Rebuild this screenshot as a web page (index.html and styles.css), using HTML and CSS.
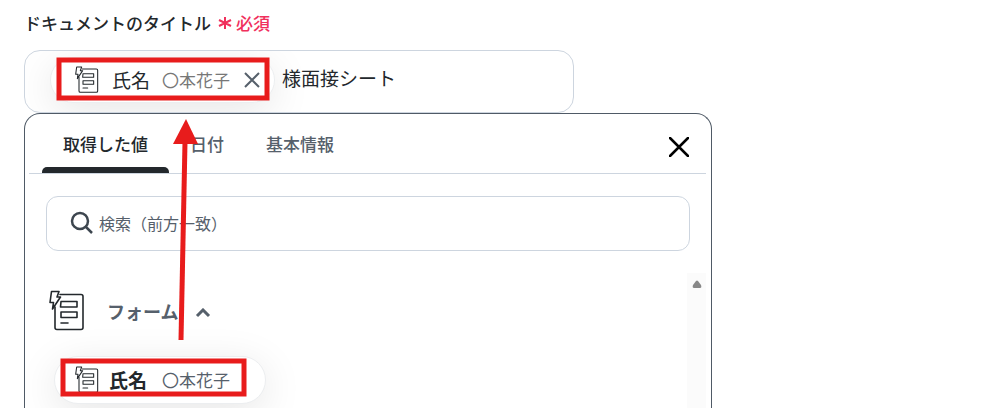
FILE: index.html
```html
<!DOCTYPE html>
<html lang="ja">
<head>
  <meta charset="UTF-8">
  <title>ドキュメントのタイトル</title>
  <link rel="stylesheet" href="styles.css">
</head>
<body>

<svg class="symbols">
  <symbol id="form-icon" viewBox="0 0 36 42">
    <g fill="none" stroke="#23282c" stroke-width="1.6" stroke-linejoin="round" stroke-linecap="round">
      <path d="M11 4.5H32Q34 4.5 34 6.5V37.5Q34 39.5 32 39.5H8Q6 39.5 6 37.5V17"/>
      <path d="M2.5 1.5H10L8 7H11.5L3.5 19L4.5 12.5H1Z"/>
      <path d="M12 11.5H28V17H11.5ZM12 22H28V27.5H12ZM12 33H19"/>
    </g>
  </symbol>
</svg>

<form class="editor">
  <label class="title-label" for="docTitle">ドキュメントのタイトル
    <span class="required"><svg width="14" height="14" viewBox="0 0 14 14"><path d="M7 1V13M1 4L13 10M13 4L1 10"/></svg>必須</span>
  </label>

  <div class="title-field">
    <span class="chip">
      <svg class="chip-icon"><use href="#form-icon"/></svg>
      <span class="chip-name">氏名</span>
      <span class="chip-value">〇本花子</span>
      <button type="button" class="chip-remove" aria-label="削除">
        <svg width="16" height="16" viewBox="0 0 16 16"><path d="M1 1L15 15M15 1L1 15"/></svg>
      </button>
    </span>
    <input type="text" id="docTitle" class="title-input" value="様面接シート">
  </div>

  <div class="panel">
    <div class="panel-header">
      <div class="tabs" role="tablist">
        <button type="button" role="tab" class="tab active" aria-selected="true">取得した値</button>
        <button type="button" role="tab" class="tab">日付</button>
        <button type="button" role="tab" class="tab">基本情報</button>
      </div>
      <button type="button" class="close" aria-label="閉じる">
        <svg width="20" height="20" viewBox="0 0 20 20"><path d="M1 1L19 19M19 1L1 19"/></svg>
      </button>
    </div>

    <div class="search">
      <svg width="24" height="24" viewBox="0 0 24 24"><circle cx="10" cy="10" r="8"/><path d="M16 16L22 22"/></svg>
      <input type="text" class="search-input" placeholder="検索（前方一致）" aria-label="検索">
    </div>

    <div class="list">
      <div class="list-body">
        <button type="button" class="group" aria-expanded="true">
          <svg class="group-icon"><use href="#form-icon"/></svg>
          <span>フォーム</span>
          <svg class="caret" width="16" height="10" viewBox="0 0 16 10"><path d="M2 8L8 2L14 8"/></svg>
        </button>
        <button type="button" class="chip option">
          <svg class="chip-icon"><use href="#form-icon"/></svg>
          <span class="chip-name">氏名</span>
          <span class="chip-value">〇本花子</span>
        </button>
      </div>
      <div class="scrollbar">
        <svg width="10" height="8" viewBox="0 0 10 8"><path d="M4 1Q5 0 6 1L9 5Q10 8 8 8H2Q0 8 1 5Z"/></svg>
      </div>
    </div>
  </div>
</form>

<!-- guide marks drawn over the form -->
<svg class="guide" width="280" height="408" viewBox="0 0 280 408">
  <rect x="59" y="60" width="208" height="38"/>
  <rect x="63" y="361" width="181" height="33"/>
  <path class="shaft" d="M181 340L185 142"/>
  <path class="head" d="M186 119L198 144H173Z"/>
</svg>

</body>
</html>
```
FILE: styles.css
```css
* {
  box-sizing: border-box;
}
body {
  margin: 0;
  background: #fff;
  color: #23282c;
  font-family: "Noto Sans CJK JP", sans-serif;
  font-size: 17px;
  line-height: 24px;
}
button, input {
  font: inherit;
  color: inherit;
  border: none;
  background: none;
  padding: 0;
}
button {
  cursor: pointer;
}
input {
  outline: none;
  min-width: 0;
  flex: 1;
}
svg {
  flex: none;
  fill: none;
  stroke: currentColor;
}
.symbols {
  display: none;
}
.editor {
  display: flex;
  flex-direction: column;
  height: 100vh;
  overflow: hidden;
  padding: 11px 24px 0;
}
.title-label {
  display: flex;
  align-items: center;
  gap: 7px;
  font-weight: 500;
}
.required {
  display: flex;
  align-items: center;
  gap: 4px;
  color: #f0305c;
}
.required svg {
  stroke-width: 2;
}
.title-field {
  display: flex;
  align-items: center;
  gap: 7px;
  width: 100%;
  max-width: 550px;
  height: 63px;
  flex: none;
  margin-top: 15px;
  padding: 0 25px 4px;
  border: 1px solid #cdd5df;
  border-radius: 16px;
  overflow: hidden;
}
.title-input {
  font-size: 19px;
  height: 28px;
  margin-bottom: 4px;
}
.chip {
  display: flex;
  align-items: center;
  height: 46px;
  padding: 0 14px 0 24px;
  border: 1px solid #eceef0;
  border-radius: 24px;
  background: #fff;
  box-shadow: 0 8px 40px rgba(0, 0, 0, 0.1);
}
.chip-icon {
  width: 24px;
  height: 28px;
}
.chip-name {
  margin-left: 13px;
  font-size: 19px;
}
.chip-value {
  margin-left: 12px;
  color: #777;
}
.chip-remove {
  display: flex;
  margin-left: 14px;
  color: #56606b;
}
.chip-remove svg {
  stroke-width: 2;
}
.panel {
  display: flex;
  flex-direction: column;
  flex: 1;
  width: 100%;
  max-width: 688px;
  border: 1px solid #4f5a66;
  border-bottom: none;
  border-radius: 16px 16px 0 0;
  background: #fff;
  overflow: hidden;
}
.panel-header {
  display: flex;
  justify-content: space-between;
  align-items: center;
  flex: none;
  height: 60px;
  margin: 0 5px 0 4px;
  padding: 0 17px 0 13px;
  border-bottom: 1px solid #cdd5df;
}
.tabs {
  display: flex;
  align-self: stretch;
}
.tab {
  position: relative;
  padding: 0 21px;
  color: #56606b;
  font-weight: 500;
}
.tab.active {
  color: #23282c;
}
.tab.active::after {
  content: "";
  position: absolute;
  left: 0;
  right: 0;
  bottom: 0;
  height: 6px;
  border-radius: 5px 5px 0 0;
  background: #23282c;
}
.close {
  display: flex;
  margin-top: 6px;
  color: #000;
}
.close svg {
  stroke-width: 2.5;
  stroke-linecap: round;
}
.search {
  display: flex;
  align-items: center;
  gap: 5px;
  flex: none;
  height: 55px;
  margin: 22px 21px;
  padding: 0 23px 2px;
  border: 1px solid #cdd5df;
  border-radius: 12px;
  color: #3d464f;
}
.search svg {
  stroke-width: 2.5;
}
.search-input {
  font-size: 16px;
}
.search-input::placeholder {
  color: #56606b;
  opacity: 1;
}
.list {
  display: flex;
  flex: 1;
  margin-right: 5px;
}
.list-body {
  flex: 1;
  padding: 17px 0 0 24px;
}
.group {
  display: flex;
  align-items: center;
  color: #56606b;
  font-size: 18px;
  font-weight: 700;
}
.group-icon {
  width: 36px;
  height: 42px;
  margin-right: 22px;
}
.caret {
  margin: 4px 0 0 17px;
  stroke-width: 3;
}
.option {
  height: 48px;
  margin: 24px 0 0 5px;
  padding: 0 35px 0 20px;
}
.option .chip-name {
  margin-left: 10px;
  font-weight: 700;
}
.option .chip-value {
  margin-left: 15px;
  color: #56606b;
}
.scrollbar {
  width: 19px;
  padding: 7px 0 0 5px;
  background: #fbfbfb;
}
.scrollbar svg {
  display: block;
  fill: #888;
  stroke: none;
}
.guide {
  position: absolute;
  top: 0;
  left: 0;
  pointer-events: none;
  color: #e81c1c;
  stroke-width: 5;
}
.guide .head {
  fill: currentColor;
  stroke: none;
}
```
